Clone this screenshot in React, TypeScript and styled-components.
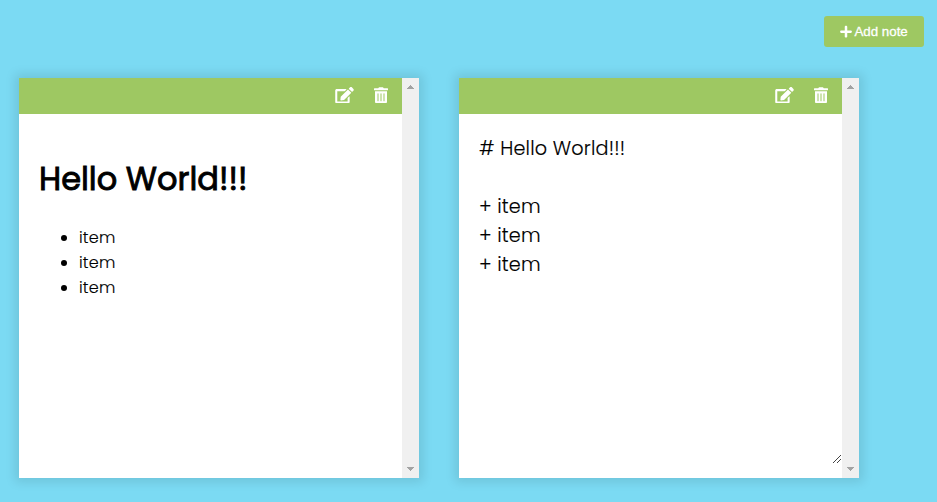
import React from "react";
import styled, { createGlobalStyle } from "styled-components";
import { FaEdit, FaPlus, FaTrashAlt } from "react-icons/fa";

const GlobalStyle = createGlobalStyle`
  * { box-sizing: border-box; }
  body {
    margin: 0;
    background: #7bdaf3;
    color: #000;
    font-family: Poppins, Inter, "Open Sans", sans-serif;
    overflow: hidden;
  }
`;

const Page = styled.div`
  display: flex;
  flex-direction: column;
  height: 502px;
`;

const Toolbar = styled.header`
  display: flex;
  justify-content: flex-end;
  padding: 16px 13px 31px;
`;

const AddButton = styled.button`
  display: flex;
  align-items: center;
  justify-content: center;
  gap: 2.6px;
  width: 100px;
  height: 31px;
  padding: 0 0.4px 0 0;
  border: 0;
  border-radius: 3px;
  background: #9ec862;
  color: #fff;
  font: 13.333px "Liberation Sans", Arial, sans-serif;
  -webkit-text-stroke: 0.3px #fff;

  svg { width: 12px; height: 13.333px; }
`;

const Board = styled.main`
  display: flex;
  gap: 40px;
  padding-left: 19px;
`;

const NoteCard = styled.article`
  display: flex;
  width: 400px;
  height: 400px;
  background: #fff;
  box-shadow: 0 0 10px 4px rgba(0, 0, 0, 0.1);
`;

const NoteContent = styled.div`
  display: flex;
  flex: 1;
  flex-direction: column;
`;

const Tools = styled.div`
  display: flex;
  align-items: center;
  justify-content: flex-end;
  gap: 20px;
  height: 36px;
  padding: 0 14px 2px 0;
  background: #9ec862;
`;

const ToolButton = styled.button<{ $width: number }>`
  display: flex;
  padding: 0;
  border: 0;
  background: none;
  color: #fff;

  svg { width: ${({ $width }) => $width}px; height: 16.5px; }
`;

const Preview = styled.div`
  padding: 40px 20px 0;
`;

const Title = styled.h1`
  margin: 0 0 22px;
  font-size: 32px;
  font-weight: 400;
  line-height: 49px;
  letter-spacing: 0;
  -webkit-text-stroke: 0.9px #000;
  white-space: nowrap;
`;

const List = styled.ul`
  margin: 0;
  padding-left: 40px;
  font-size: 16px;
  font-weight: 300;
  line-height: 25px;
  letter-spacing: 0.2px;
  -webkit-text-stroke: 0.15px #000;
`;

const Editor = styled.textarea`
  width: 383px;
  height: 350px;
  padding: 20px;
  border: 0;
  outline: 0;
  resize: none;
  overflow: hidden;
  background: transparent;
  color: #000;
  font: 300 19.2px/29px Poppins, Inter, "Open Sans", sans-serif;
  letter-spacing: 0.2px;
  -webkit-text-stroke: 0.15px #000;
`;

const ResizeGrip = styled.svg`
  align-self: flex-end;
  width: 8px;
  height: 8px;
  margin: -9px 1px 0 0;
`;

const ScrollTrack = styled.div`
  display: flex;
  flex-direction: column;
  justify-content: space-between;
  align-items: center;
  width: 17px;
  padding: 7px 0;
  background: #f0f0f0;

  svg { display: block; width: 7px; height: 4px; }
`;

const ScrollBar = () => (
  <ScrollTrack>
    <svg viewBox="0 0 7 4" fill="#a3a3a3" shapeRendering="crispEdges">
      <path d="M3 0h1v1h1v1h1v1h1v1H0V3h1V2h1V1h1z" />
    </svg>
    <svg viewBox="0 0 7 4" fill="#a3a3a3" shapeRendering="crispEdges">
      <path d="M0 0h7v1H6v1H5v1H4v1H3V3H2V2H1V1H0z" />
    </svg>
  </ScrollTrack>
);

const Note = ({ children }: { children: React.ReactNode }) => (
  <NoteCard>
    <NoteContent>
      <Tools>
        <ToolButton $width={19} aria-label="Edit note"><FaEdit /></ToolButton>
        <ToolButton $width={14} aria-label="Delete note"><FaTrashAlt /></ToolButton>
      </Tools>
      {children}
    </NoteContent>
    <ScrollBar />
  </NoteCard>
);

export default function App() {
  return (
    <Page>
      <GlobalStyle />
      <Toolbar>
        <AddButton><FaPlus />Add note</AddButton>
      </Toolbar>
      <Board>
        <Note>
          <Preview>
            <Title>Hello World!!!</Title>
            <List>
              <li>item</li>
              <li>item</li>
              <li>item</li>
            </List>
          </Preview>
        </Note>
        <Note>
          <Editor spellCheck={false} defaultValue={"# Hello World!!!\n\n+ item\n+ item\n+ item"} />
          <ResizeGrip viewBox="0 0 8 8" stroke="#444" fill="none">
            <path d="M0 8 8 0M4 8 8 4" />
          </ResizeGrip>
        </Note>
      </Board>
    </Page>
  );
}
